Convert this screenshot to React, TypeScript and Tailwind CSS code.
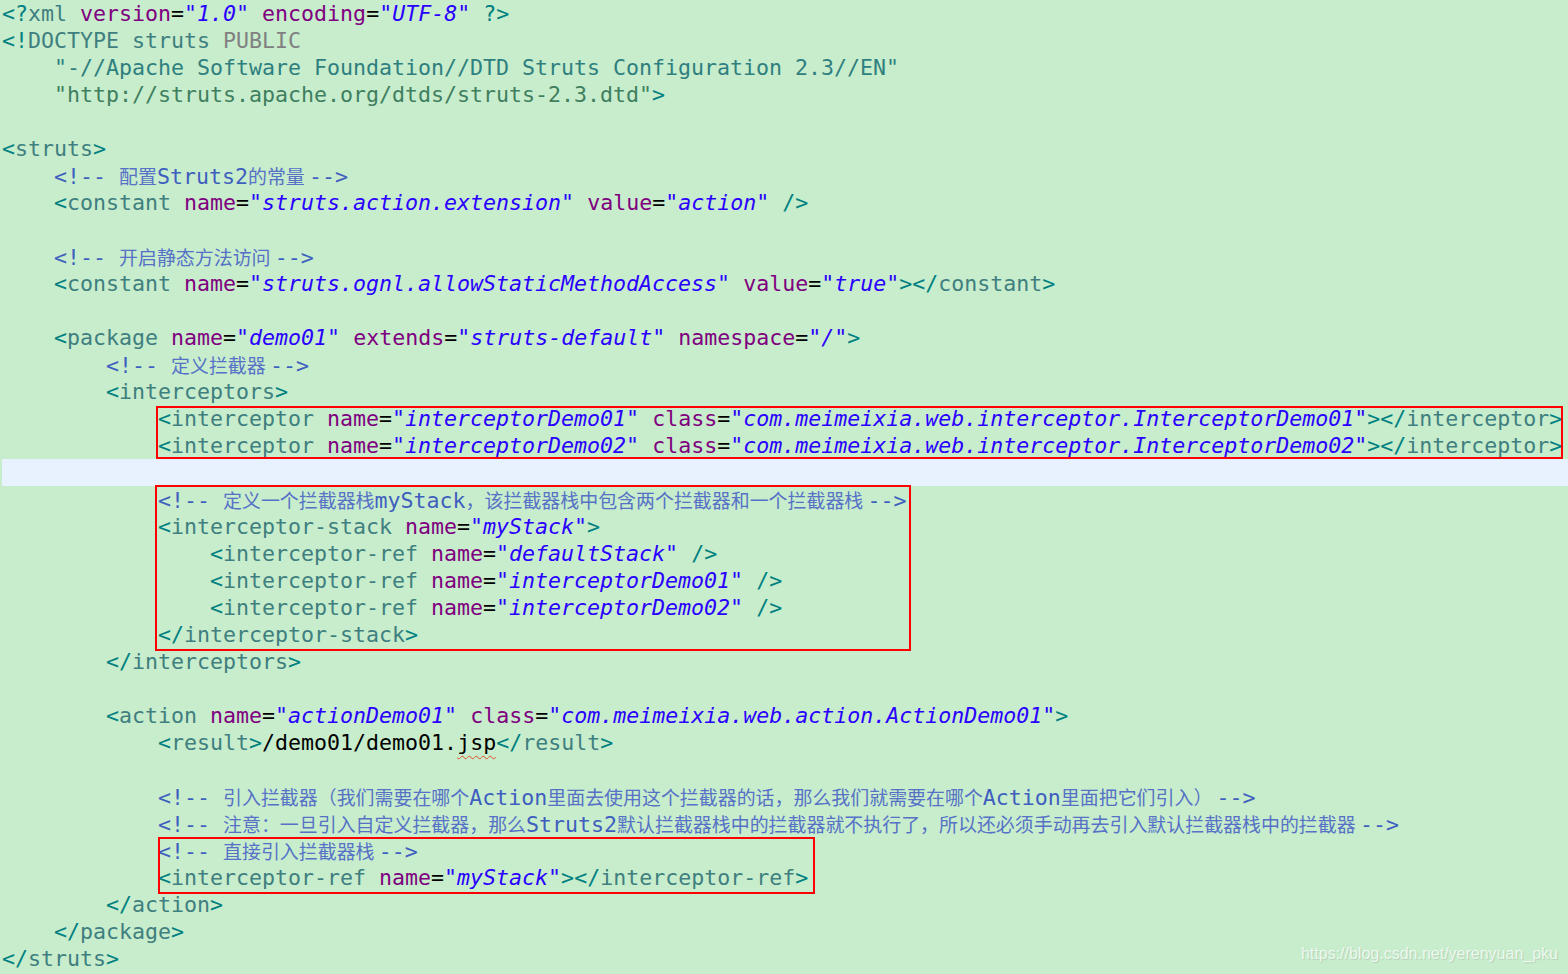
import React from "react";

type Tok = [string, string];

// eclipse xml editor palette
const colors: Record<string, string> = {
  t: "text-[#008080]",
  n: "text-[#3F7F7F]",
  a: "text-[#7F007F]",
  e: "text-black",
  v: "text-[#2A00FF] italic",
  c: "text-[#3F5FBF]",
  x: "text-black",
  p: "text-[#808080]",
  d: "text-[#2F7F7F]",
  s: "text-[#3F7F5F]",
};

const lines: (string | Tok[])[] = [
  '<?xml version="1.0" encoding="UTF-8" ?>',
  [
    ["t", "<!"],
    ["n", "DOCTYPE"],
    ["x", " "],
    ["n", "struts"],
    ["x", " "],
    ["p", "PUBLIC"],
  ],
  [
    ["x", "    "],
    ["d", '"-//Apache Software Foundation//DTD Struts Configuration 2.3//EN"'],
  ],
  [
    ["x", "    "],
    ["s", '"http://struts.apache.org/dtds/struts-2.3.dtd"'],
    ["t", ">"],
  ],
  "",
  "<struts>",
  "    <!-- 配置Struts2的常量 -->",
  '    <constant name="struts.action.extension" value="action" />',
  "",
  "    <!-- 开启静态方法访问 -->",
  '    <constant name="struts.ognl.allowStaticMethodAccess" value="true"></constant>',
  "",
  '    <package name="demo01" extends="struts-default" namespace="/">',
  "        <!-- 定义拦截器 -->",
  "        <interceptors>",
  '            <interceptor name="interceptorDemo01" class="com.meimeixia.web.interceptor.InterceptorDemo01"></interceptor>',
  '            <interceptor name="interceptorDemo02" class="com.meimeixia.web.interceptor.InterceptorDemo02"></interceptor>',
  "",
  "            <!-- 定义一个拦截器栈myStack，该拦截器栈中包含两个拦截器和一个拦截器栈 -->",
  '            <interceptor-stack name="myStack">',
  '                <interceptor-ref name="defaultStack" />',
  '                <interceptor-ref name="interceptorDemo01" />',
  '                <interceptor-ref name="interceptorDemo02" />',
  "            </interceptor-stack>",
  "        </interceptors>",
  "",
  '        <action name="actionDemo01" class="com.meimeixia.web.action.ActionDemo01">',
  "            <result>/demo01/demo01.jsp</result>",
  "",
  "            <!-- 引入拦截器（我们需要在哪个Action里面去使用这个拦截器的话，那么我们就需要在哪个Action里面把它们引入） -->",
  "            <!-- 注意：一旦引入自定义拦截器，那么Struts2默认拦截器栈中的拦截器就不执行了，所以还必须手动再去引入默认拦截器栈中的拦截器 -->",
  "            <!-- 直接引入拦截器栈 -->",
  '            <interceptor-ref name="myStack"></interceptor-ref>',
  "        </action>",
  "    </package>",
  "</struts>",
];

const tokenize = (line: string): Tok[] => {
  const trimmed = line.trimStart();
  if (trimmed.startsWith("<!--")) {
    return [
      ["x", line.slice(0, line.length - trimmed.length)],
      ["c", trimmed],
    ];
  }
  const out: Tok[] = [];
  let inTag = false;
  let expectName = false;
  const re = /(<\?|<\/|<|\?>|\/>|>)|("[^"]*")|(=)|(\s+)|([^<>"=\s\/?]+|[\/?])/g;
  let m: RegExpExecArray | null;
  while ((m = re.exec(line))) {
    if (m[1]) {
      out.push(["t", m[1]]);
      if (m[1].startsWith("<")) {
        inTag = true;
        expectName = true;
      } else inTag = false;
    } else if (m[2]) out.push(["v", m[2]]);
    else if (m[3]) out.push(["e", m[3]]);
    else if (m[4]) out.push(["x", m[4]]);
    else if (expectName) {
      out.push(["n", m[5]]);
      expectName = false;
    } else out.push([inTag ? "a" : "x", m[5]]);
  }
  return out;
};

// CJK runs fall back to a narrower font, the space after them too
const Comment = ({ text }: { text: string }) => (
  <>
    {text.split(/([\u3000-\u9fff\uff00-\uffef]+ ?)/).map((part, i) =>
      i % 2 === 1 ? (
        <span
          key={i}
          className="font-['Noto_Sans_CJK_SC',sans-serif] text-[18.95px] text-[#5671C6]"
        >
          {part}
        </span>
      ) : (
        <span key={i}>{part}</span>
      )
    )}
  </>
);

const Token = ({ tok }: { tok: Tok }) => {
  const [type, text] = tok;
  if (type === "c") {
    return (
      <span className={colors.c}>
        <Comment text={text} />
      </span>
    );
  }
  if (type === "x" && text.endsWith(".jsp")) {
    return (
      <span className={colors.x}>
        {text.slice(0, -3)}
        <span className="underline decoration-wavy decoration-[#E0502A] decoration-1 underline-offset-[5px]">
          jsp
        </span>
      </span>
    );
  }
  return <span className={colors[type]}>{text}</span>;
};

export default function App() {
  return (
    <div className="relative w-[1568px] h-[974px] overflow-hidden bg-[#C7EDCC]">
      <div className="font-['DejaVu_Sans_Mono',monospace] text-[21.6px] whitespace-pre">
        {lines.map((line, i) => (
          <div
            key={i}
            className={
              i === 17
                ? "h-[27px] leading-[27px] pl-[2px] ml-[2px] bg-[#E8F2FE]"
                : "h-[27px] leading-[27px] pl-[2px]"
            }
          >
            {(typeof line === "string" ? tokenize(line) : line).map((tok, j) => (
              <Token key={j} tok={tok} />
            ))}
          </div>
        ))}
      </div>

      {/* red annotation boxes drawn over the code */}
      <div className="absolute left-[156px] top-[406px] w-[1407px] h-[53px] border-2 border-[#FF0000]" />
      <div className="absolute left-[155px] top-[485px] w-[756px] h-[166px] border-2 border-[#FF0000]" />
      <div className="absolute left-[158px] top-[837px] w-[657px] h-[57px] border-2 border-[#FF0000]" />

      <div className="absolute right-[10px] bottom-[8px] font-['Liberation_Sans',Arial,sans-serif] text-[16px] text-white/75 [text-shadow:1px_1px_1px_rgba(0,0,0,0.12)]">
        https://blog.csdn.net/yerenyuan_pku
      </div>
    </div>
  );
}
